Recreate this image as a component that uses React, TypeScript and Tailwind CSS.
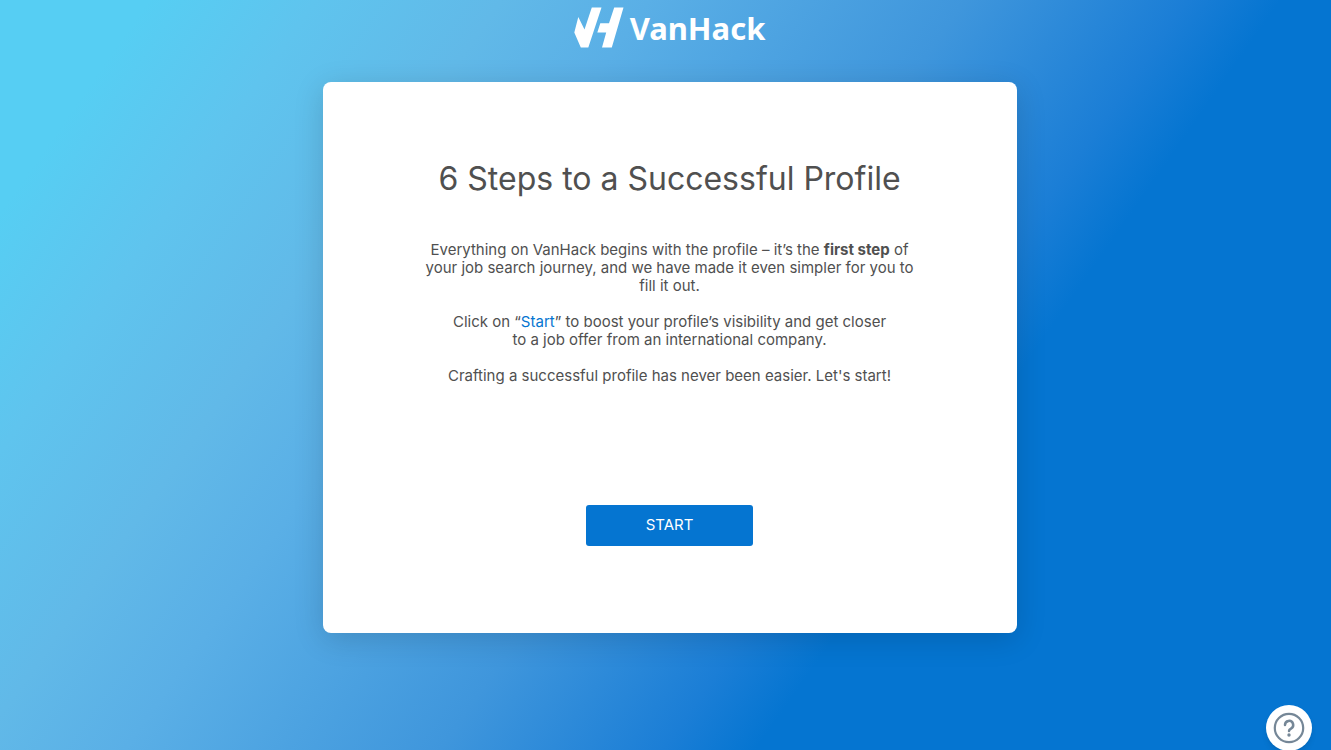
import React from "react";

function Logo() {
  return (
    <a href="#" aria-label="VanHack home" className="flex h-[42px] items-center gap-1.5 text-white">
      <svg viewBox="0 0 50 42" className="h-[42px] w-[50px]" fill="currentColor" aria-hidden="true">
        <path d="M0.3 25.5 4.3 10 10.5 22.5 17.8 0.5H27.5L14.3 40.5H6.8Z" />
        <path d="M40.2 0.5H49.5L37.8 40.5H28L32.2 25.5H23.3L26.3 16.3H35Z" />
      </svg>
      <span className="font-['Noto_Sans',sans-serif] text-[31px] leading-[42px] font-bold">VanHack</span>
    </a>
  );
}

function HelpButton() {
  return (
    <button
      type="button"
      aria-label="Help"
      className="fixed right-[19px] -bottom-px flex size-[46px] items-center justify-center rounded-full bg-white text-[#758797] shadow-md"
    >
      <svg viewBox="0 0 32 32" className="size-8" fill="none" stroke="currentColor" strokeLinecap="round" aria-hidden="true">
        <circle cx="16" cy="16" r="14.2" strokeWidth="2.2" />
        <path d="M12 13a4.1 4.1 0 1 1 6 3.6c-1.3.7-2 1.1-2 2.5" strokeWidth="2.5" />
        <circle cx="16" cy="23" r="1.7" fill="currentColor" stroke="none" />
      </svg>
    </button>
  );
}

export default function App() {
  return (
    <div className="flex min-h-screen flex-col items-center bg-[linear-gradient(125deg,#56cef3_8%,#5fc4ee_17%,#61b9e8_27%,#5aafe6_35%,#3f96dc_52%,#1b7ed6_64%,#0575d1_69%)] pt-[7px] pr-4 pb-12 pl-6 font-['Inter',sans-serif] text-[#505050]">
      <header>
        <Logo />
      </header>
      <main className="mt-[33px] flex w-full max-w-[694px] flex-col items-center rounded-lg bg-white px-[97px] pt-[76px] pb-[87px] text-center shadow-[0_6px_30px_rgba(0,0,0,0.15)]">
        <h1 className="text-[32px] leading-[42px]">6 Steps to a Successful Profile</h1>
        <div className="mt-[41px] flex flex-col gap-[18px] text-[15px] leading-[18px]">
          <p>
            Everything on VanHack begins with the profile – it’s the <strong className="font-bold">first step</strong> of
            your job search journey, and we have made it even simpler for you to fill it out.
          </p>
          <p>
            Click on “<span className="text-[#0575d1]">Start</span>” to boost your profile’s visibility and get closer{" "}
            <br />
            to a job offer from an international company.
          </p>
          <p>Crafting a successful profile has never been easier. Let's start!</p>
        </div>
        <button type="button" className="mt-[120px] h-[41px] w-[167px] rounded-[3px] bg-[#0575d1] text-[15px] text-white">
          START
        </button>
      </main>
      <HelpButton />
    </div>
  );
}
